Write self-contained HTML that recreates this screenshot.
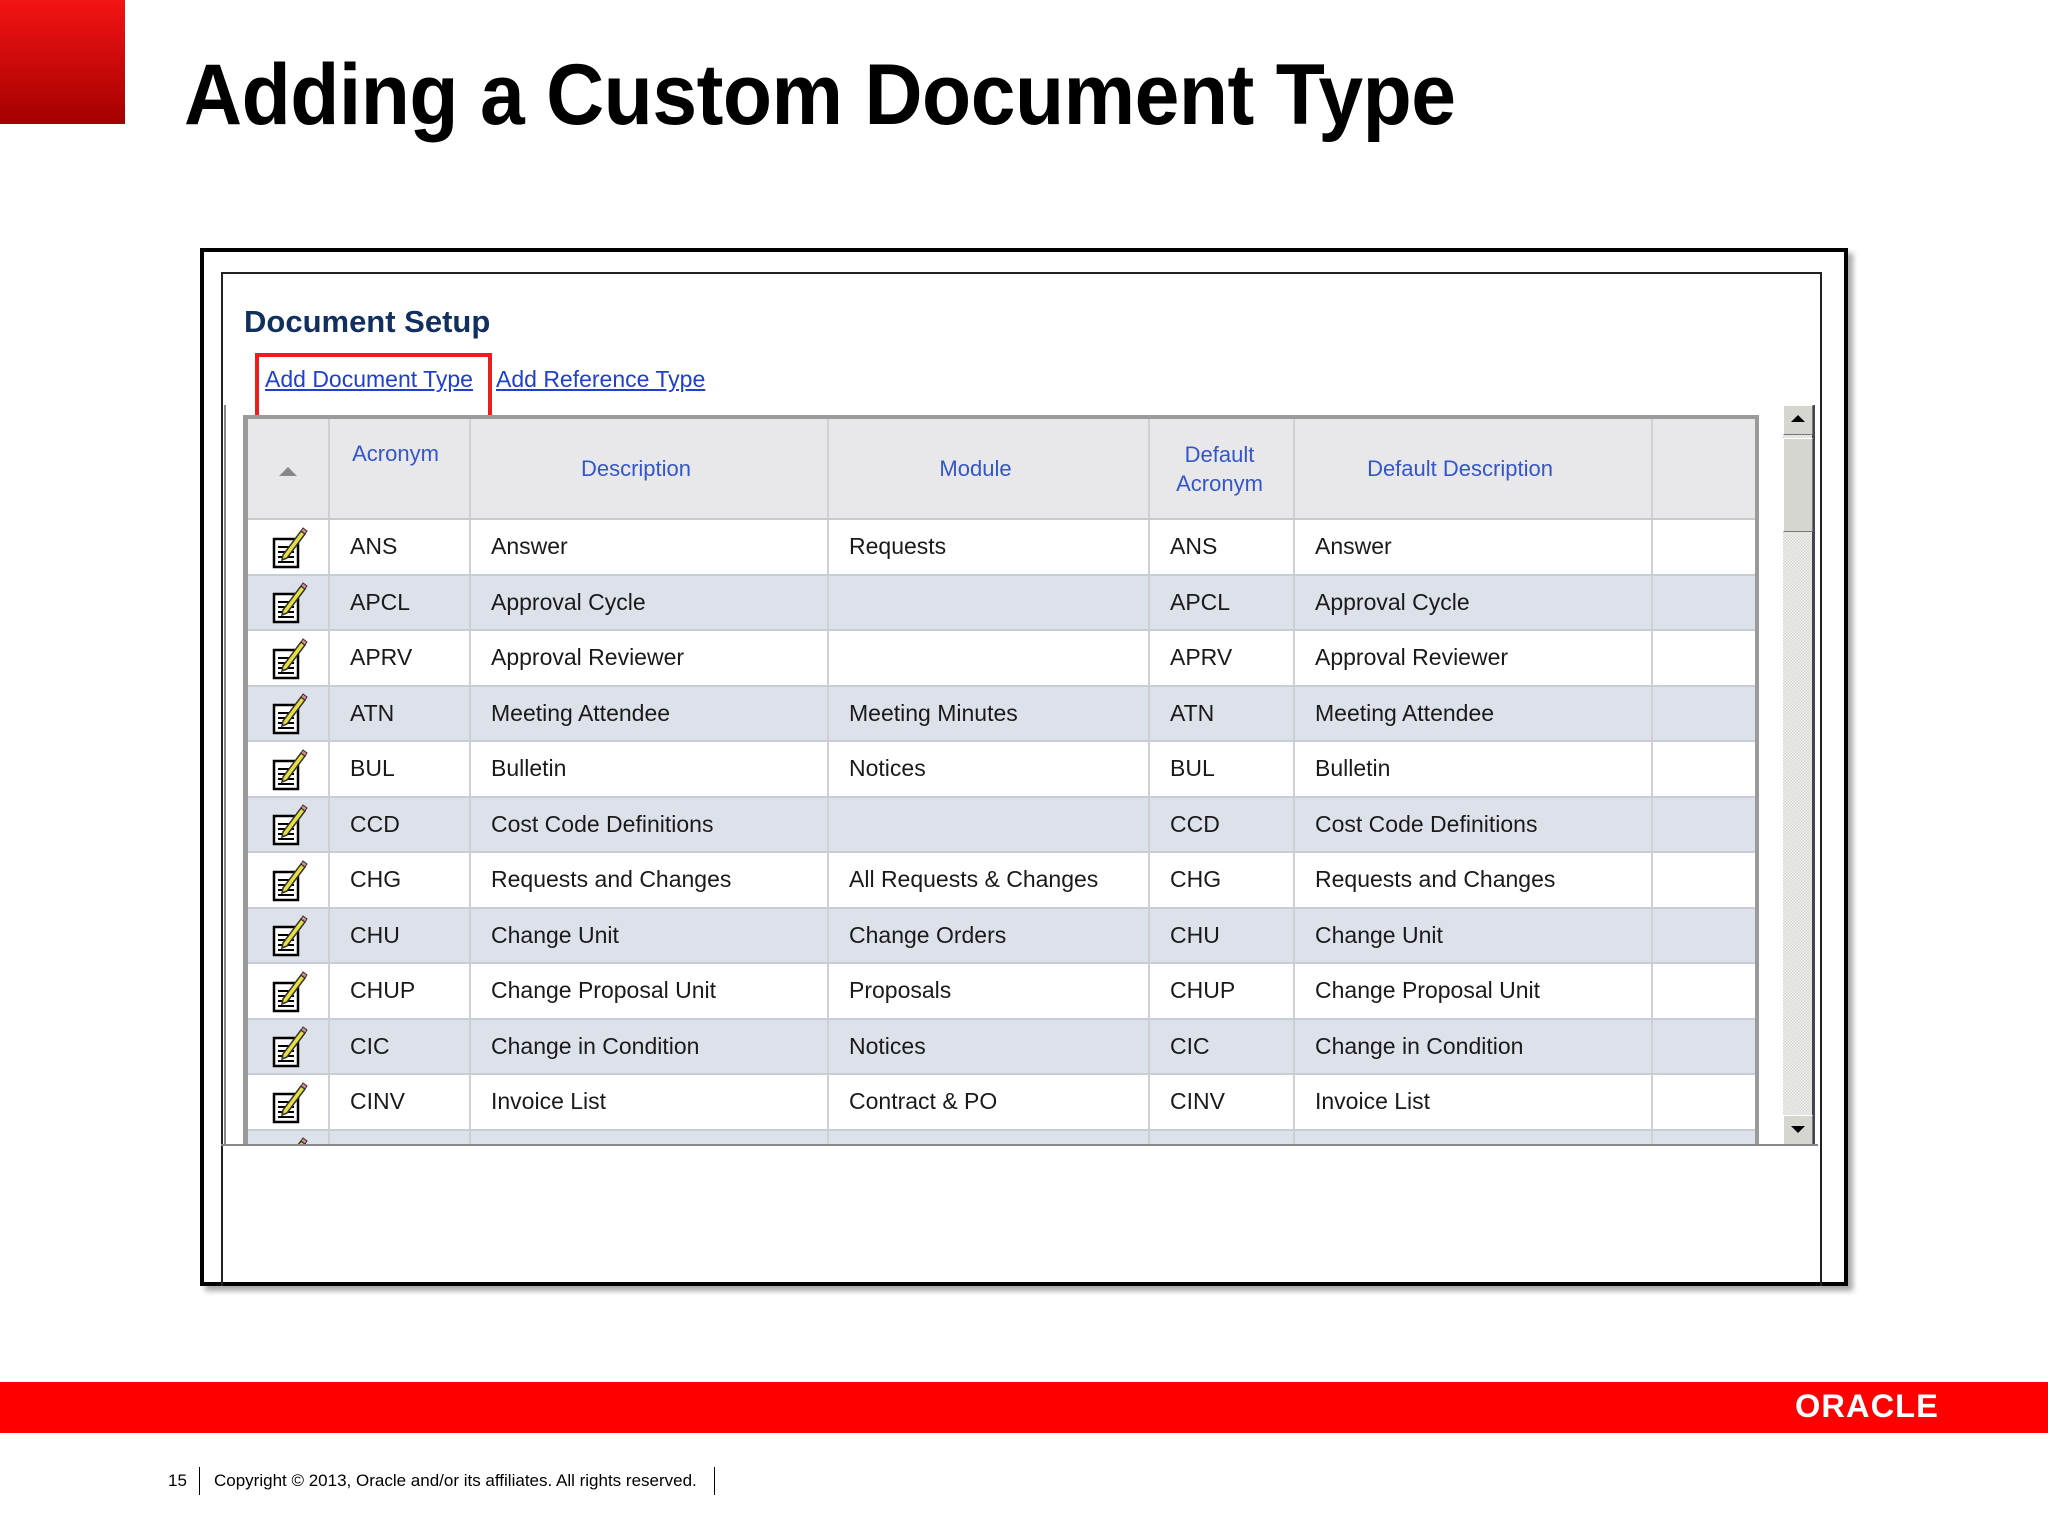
<!DOCTYPE html>
<html><head><meta charset="utf-8"><style>
*{margin:0;padding:0;box-sizing:border-box}
body{width:2048px;height:1536px;position:relative;background:#fff;font-family:"Liberation Sans",Arial,sans-serif;overflow:hidden}
.abs{position:absolute}
#red{left:0;top:0;width:125px;height:124px;background:linear-gradient(#f41414,#a40000)}
#title{left:184px;top:46px;font-size:86px;font-weight:bold;color:#000;white-space:nowrap;letter-spacing:-0.5px;transform:scaleX(0.935);transform-origin:left}
#outer{left:200px;top:248px;width:1648px;height:1038px;border:4px solid #000;box-shadow:5px 5px 5px #aaa}
#inner{left:221px;top:272px;width:1601px;height:1014px;border:2px solid #222;border-bottom:none}
#ds{left:244px;top:304px;font-size:31px;font-weight:bold;color:#12305e}
#redbox{left:255px;top:353px;width:237px;height:69px;border:4px solid #ee1c1c}
.lnk{top:366px;font-size:23px;color:#1f3fd0;text-decoration:underline;white-space:nowrap}
#wrap{left:243px;top:415px;width:1516px;height:730px;overflow:hidden;border-left:5px solid #9a9a9a;border-top:4px solid #9a9a9a;border-right:4px solid #9a9a9a}
table{border-collapse:collapse;table-layout:fixed;width:1508px}
td{border-right:2px solid #cfd0d4;border-bottom:2px solid #c8ccd4;height:55.5px;font-size:23px;color:#1a1a1a;padding-left:20px;white-space:nowrap;overflow:hidden}
tr.h td{height:100px;background:#e8e8eb;color:#3356c8;text-align:center;padding:0 26px 0 0;border-bottom:2px solid #c9c9cc;font-size:22px}
tr:nth-child(odd) td{background:#dde2ea}
tr.h td{background:#e8e8eb}
td.ic{padding:0;text-align:center}
#sb{left:1783px;top:405px;width:32px;height:740px;background:repeating-conic-gradient(#d4d4d0 0 25%,#f4f4f2 0 50%) 0 0/3px 3px;border-right:3px solid #445}
.btn{position:absolute;left:0;width:30px;background:#d6d6d0;border:1px solid #fff;border-right-color:#777;border-bottom-color:#777}
#bl{left:221px;top:1144px;width:1597px;height:2px;background:#888}
#vl{left:224px;top:405px;width:2px;height:740px;background:#888}
#band{left:0;top:1382px;width:2048px;height:51px;background:#ff0000}
#oracle{left:1795px;top:1388px;font-size:32px;color:#fff;letter-spacing:1px;font-weight:bold;transform:scaleX(1.02);transform-origin:left}
.foot{top:1471px;font-size:17px;color:#000;white-space:nowrap}
.vbar{top:1467px;width:1px;height:28px;background:#000}
</style></head><body>
<div id="red" class="abs"></div>
<div id="title" class="abs">Adding a Custom Document Type</div>
<div id="outer" class="abs"></div>
<div id="inner" class="abs"></div>
<div id="ds" class="abs">Document Setup</div>
<div id="redbox" class="abs"></div>
<div class="abs lnk" style="left:265px">Add Document Type</div>
<div class="abs lnk" style="left:496px">Add Reference Type</div>
<div id="vl" class="abs"></div>
<div id="wrap" class="abs">
<table>
<colgroup><col style="width:81px"><col style="width:141px"><col style="width:358px"><col style="width:321px"><col style="width:145px"><col style="width:358px"><col style="width:104px"></colgroup>
<tr class="h"><td style="padding:0"><span style="display:inline-block;width:0;height:0;border-left:9px solid transparent;border-right:9px solid transparent;border-bottom:9px solid #888"></span></td><td style="vertical-align:top;padding:22px 8px 0 0">Acronym</td><td>Description</td><td>Module</td><td style="line-height:29px;padding:0 4px 0 0">Default<br>Acronym</td><td>Default Description</td><td></td></tr>
<tr><td class="ic">I</td><td>ANS</td><td>Answer</td><td>Requests</td><td>ANS</td><td>Answer</td><td></td></tr>
<tr><td class="ic">I</td><td>APCL</td><td>Approval Cycle</td><td></td><td>APCL</td><td>Approval Cycle</td><td></td></tr>
<tr><td class="ic">I</td><td>APRV</td><td>Approval Reviewer</td><td></td><td>APRV</td><td>Approval Reviewer</td><td></td></tr>
<tr><td class="ic">I</td><td>ATN</td><td>Meeting Attendee</td><td>Meeting Minutes</td><td>ATN</td><td>Meeting Attendee</td><td></td></tr>
<tr><td class="ic">I</td><td>BUL</td><td>Bulletin</td><td>Notices</td><td>BUL</td><td>Bulletin</td><td></td></tr>
<tr><td class="ic">I</td><td>CCD</td><td>Cost Code Definitions</td><td></td><td>CCD</td><td>Cost Code Definitions</td><td></td></tr>
<tr><td class="ic">I</td><td>CHG</td><td>Requests and Changes</td><td>All Requests &amp; Changes</td><td>CHG</td><td>Requests and Changes</td><td></td></tr>
<tr><td class="ic">I</td><td>CHU</td><td>Change Unit</td><td>Change Orders</td><td>CHU</td><td>Change Unit</td><td></td></tr>
<tr><td class="ic">I</td><td>CHUP</td><td>Change Proposal Unit</td><td>Proposals</td><td>CHUP</td><td>Change Proposal Unit</td><td></td></tr>
<tr><td class="ic">I</td><td>CIC</td><td>Change in Condition</td><td>Notices</td><td>CIC</td><td>Change in Condition</td><td></td></tr>
<tr><td class="ic">I</td><td>CINV</td><td>Invoice List</td><td>Contract &amp; PO</td><td>CINV</td><td>Invoice List</td><td></td></tr>
<tr><td class="ic">I</td><td>COMP</td><td>Company</td><td></td><td>COMP</td><td>Company</td><td></td></tr>
</table>
</div>
<div id="sb" class="abs">
<div class="btn" style="top:0;height:30px"><span style="position:absolute;left:7px;top:9px;border-left:7px solid transparent;border-right:7px solid transparent;border-bottom:7px solid #000"></span></div>
<div class="btn" style="top:33px;height:94px"></div>
<div class="btn" style="bottom:0;height:30px"><span style="position:absolute;left:7px;top:10px;border-left:7px solid transparent;border-right:7px solid transparent;border-top:7px solid #000"></span></div>
</div>
<div id="bl" class="abs"></div>
<div id="band" class="abs"></div>
<div id="oracle" class="abs">ORACLE</div>
<div class="abs foot" style="left:168px">15</div>
<div class="abs vbar" style="left:199px"></div>
<div class="abs foot" style="left:214px">Copyright © 2013, Oracle and/or its affiliates. All rights reserved.</div>
<div class="abs vbar" style="left:714px"></div>
<script>
var svg='<svg width="40" height="44" viewBox="0 0 40 44" style="display:block;margin:auto"><rect x="6" y="14" width="24" height="28" fill="#fff" stroke="#000" stroke-width="2.5"/><line x1="10" y1="22" x2="22" y2="22" stroke="#000" stroke-width="2"/><line x1="10" y1="27" x2="26" y2="27" stroke="#000" stroke-width="2"/><line x1="10" y1="32" x2="26" y2="32" stroke="#000" stroke-width="2"/><line x1="10" y1="37" x2="26" y2="37" stroke="#000" stroke-width="2"/><path d="M15 30 L33 6 L37 9 L19 33 L14 35 Z" fill="#e8e040" stroke="#333" stroke-width="1.5"/><path d="M33 6 L35 3 L39 6 L37 9 Z" fill="#d88" stroke="#333" stroke-width="1"/></svg>';
document.querySelectorAll('td.ic').forEach(function(t){if(t.textContent=='I')t.innerHTML=svg;});
</script>
</body></html>
